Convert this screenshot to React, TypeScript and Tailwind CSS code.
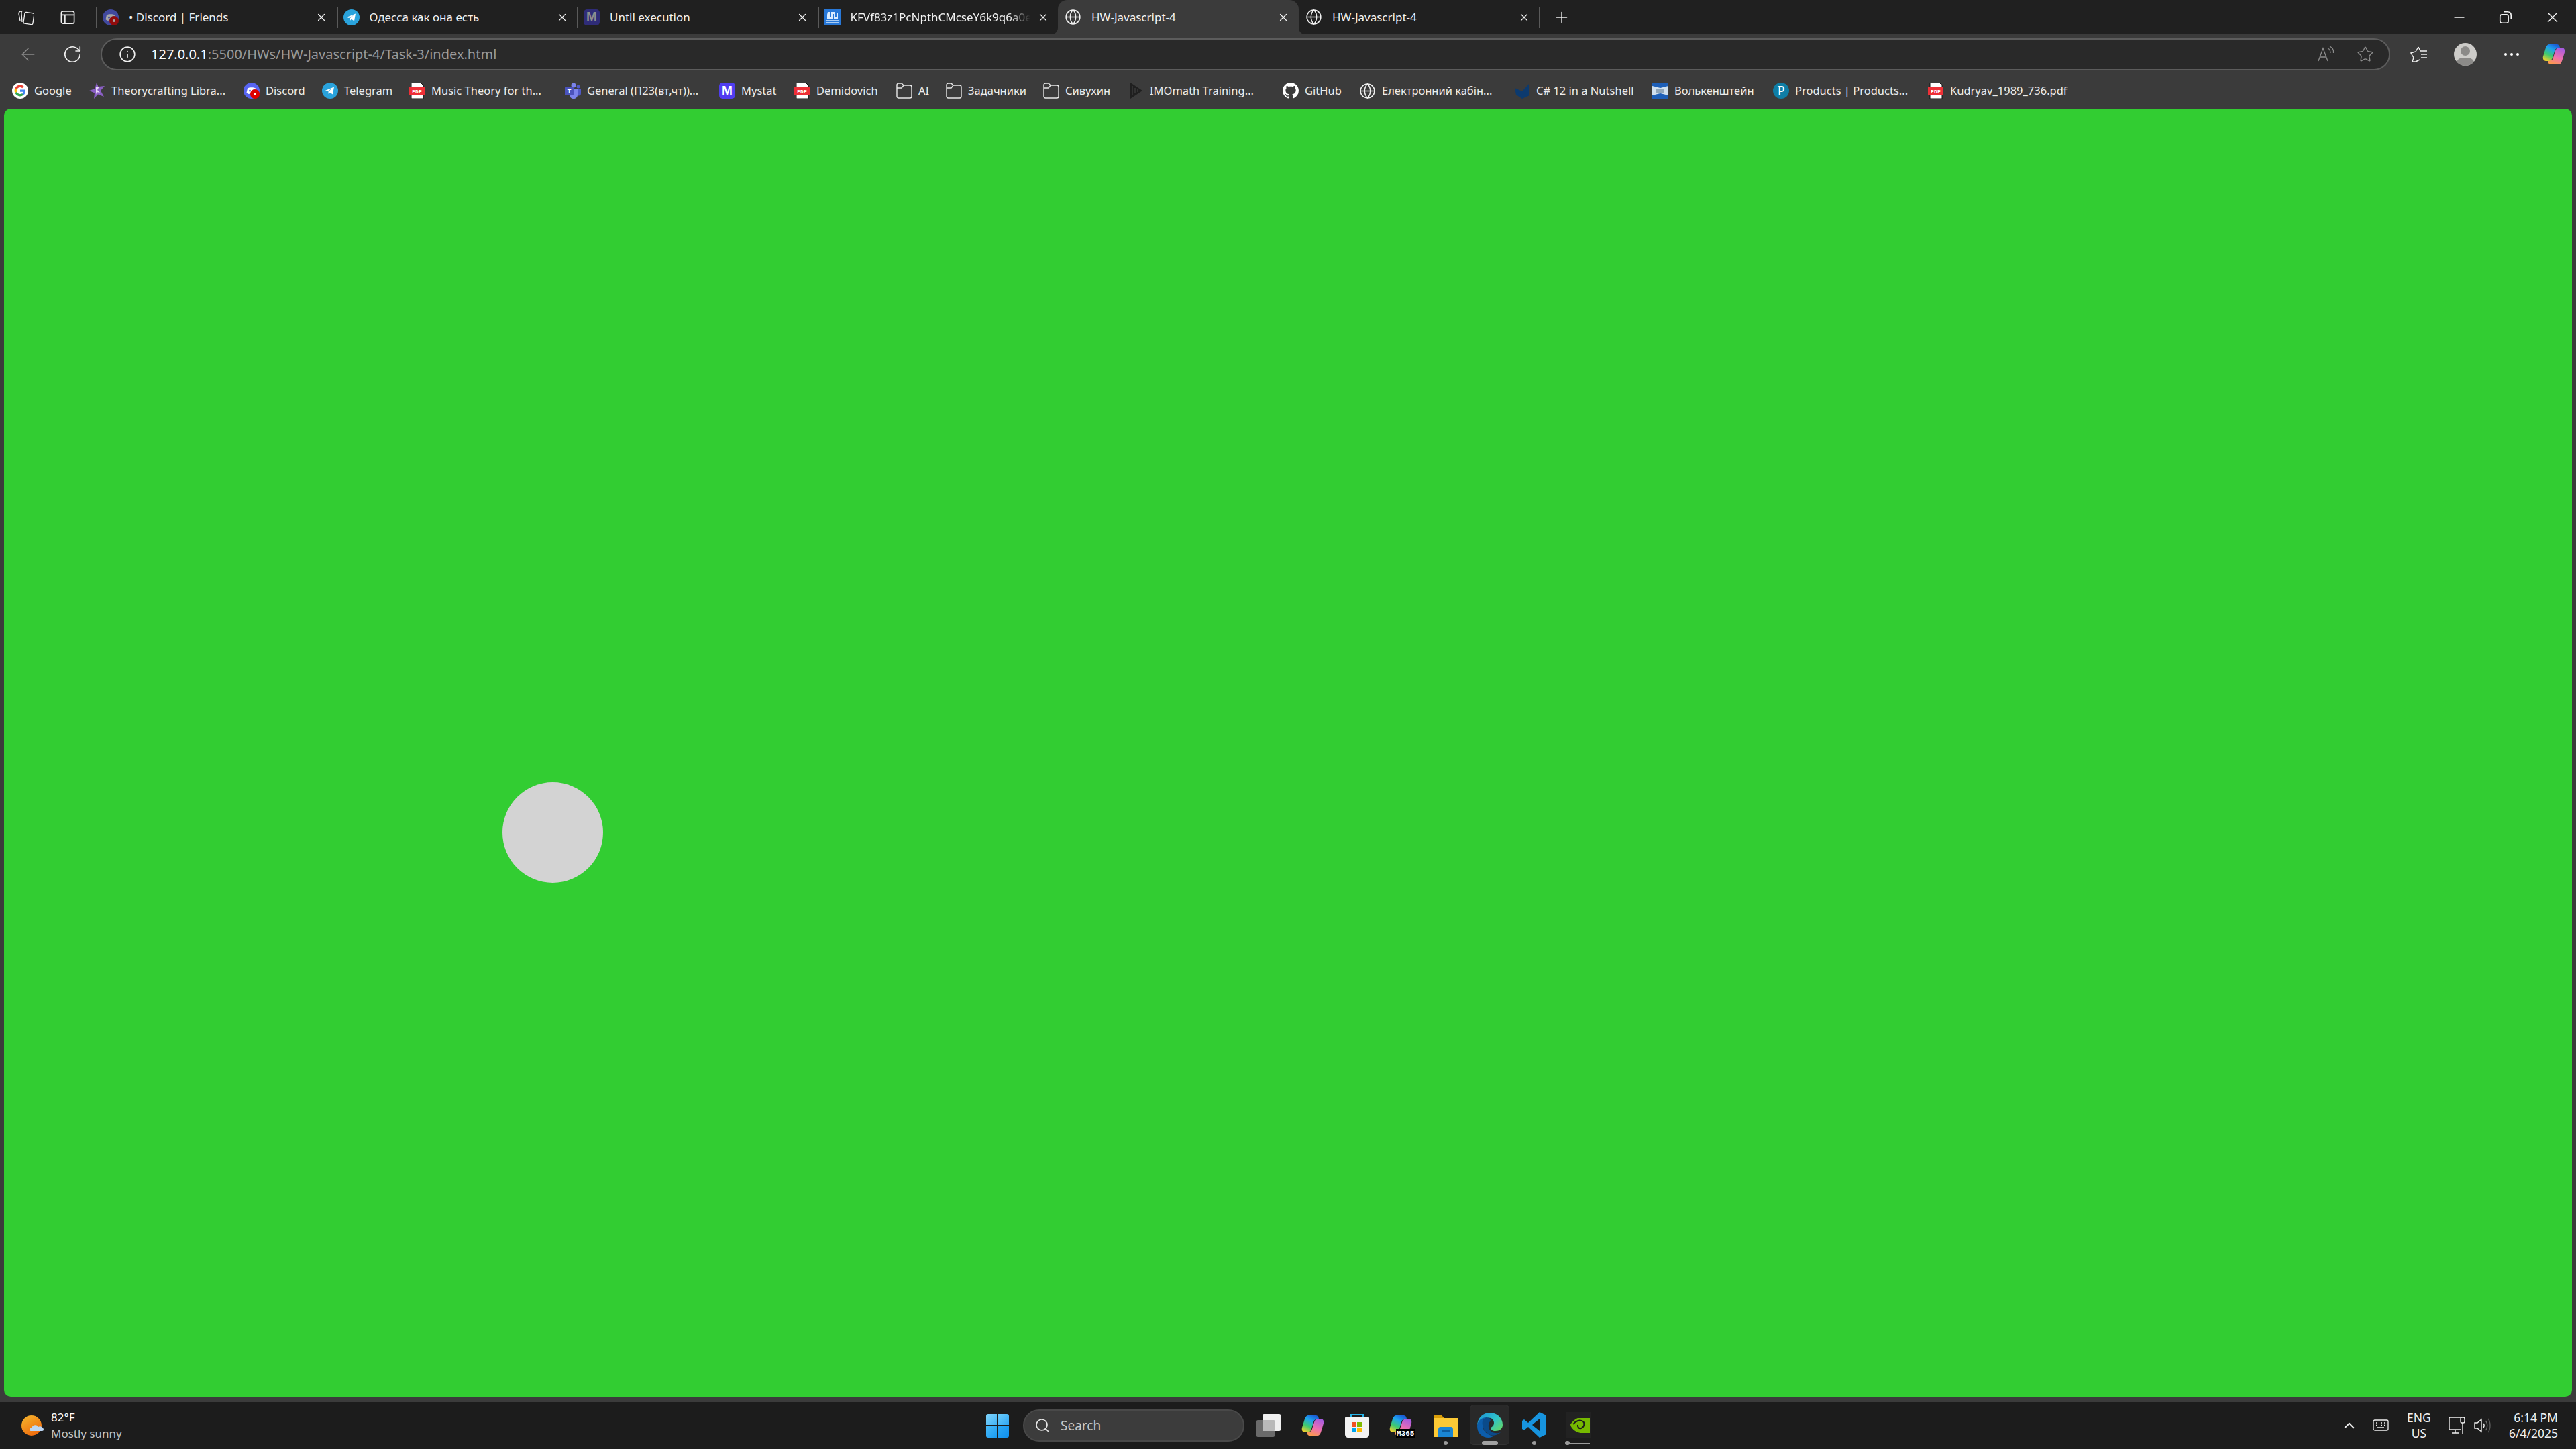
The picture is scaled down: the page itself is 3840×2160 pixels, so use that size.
import React from "react";
import { ArrowLeft, ChevronUp, Globe, Info, Minus, Plus, RotateCw, Search, Star, X } from "lucide-react";

const Telegram = () => (
  <svg viewBox="0 0 24 24" className="w-6 h-6 shrink-0">
    <circle cx="12" cy="12" r="12" fill="#2aa3dc" />
    <path d="M5 11.8 18 6.6 16 17.6 11.8 14.8 9.8 16.9 9.4 13.6 15.4 8.6 8 12.9Z" fill="#fff" />
  </svg>
);
const DiscordIcon = ({ dim }: { dim?: boolean }) => (
  <svg viewBox="0 0 24 24" className={dim ? "w-6 h-6 shrink-0 opacity-60" : "w-6 h-6 shrink-0"}>
    <circle cx="12" cy="12" r="12" fill="#5865f2" />
    <path d="M6 8.5C8.5 6.8 15.5 6.8 18 8.5L19.5 15C18 16.5 16.5 17 15.5 17L14.5 15.5H9.5L8.5 17C7.5 17 6 16.5 4.5 15Z" fill="#fff" />
    <circle cx="9.5" cy="12" r="1.5" fill="#5865f2" />
    <circle cx="14.5" cy="12" r="1.5" fill="#5865f2" />
    <circle cx="17" cy="17" r="7" fill="#dd0000" />
    <circle cx="17" cy="17" r="2" fill="#fff" />
  </svg>
);
const GoogleIcon = () => (
  <svg viewBox="0 0 24 24" className="w-6 h-6 shrink-0">
    <circle cx="12" cy="12" r="12" fill="#fff" />
    <g transform="translate(3.6 3.6) scale(.35)">
      <path fill="#EA4335" d="M24 9.5c3.5 0 6.6 1.2 9.1 3.6l6.8-6.8C35.8 2.4 30.300 0 24 0 14.600 0 6.500 5.400 2.600 13.200l7.900 6.200C12.400 13.700 17.700 9.500 24 9.500z" />
      <path fill="#4285F4" d="M47 24.500c0-1.600-.1-3.100-.4-4.500H24v9h12.900c-.6 3-2.200 5.500-4.800 7.200l7.700 6C44.300 37.900 47 31.800 47 24.500z" />
      <path fill="#FBBC05" d="M10.500 28.600c-.5-1.500-.8-3-.8-4.600s.3-3.100.8-4.600l-7.900-6.200C.9 16.500 0 20.100 0 24s.9 7.500 2.600 10.800l7.900-6.200z" />
      <path fill="#34A853" d="M24 48c6.500 0 11.900-2.100 15.800-5.800l-7.700-6c-2.100 1.400-4.900 2.300-8.100 2.300-6.300 0-11.600-4.200-13.500-9.900l-7.900 6.200C6.500 42.600 14.600 48 24 48z" />
    </g>
  </svg>
);
const TheoryIcon = () => (
  <svg viewBox="0 0 24 24" className="w-6 h-6 shrink-0">
    <path d="M11 0 13.500 6 23 5 17 12 22 21 13 17.500 7 24 8 15.500 0 12 8.500 9Z" fill="#8a5fc4" />
    <path d="M10 7 15 6 12 11 16 15 11 14 10 18Z" fill="#e5d8f7" />
  </svg>
);
const PdfIcon = () => (
  <svg viewBox="0 0 24 24" className="w-6 h-6 shrink-0">
    <path d="M3 0H17L21 4V24H3Z" fill="#fff" stroke="#111" strokeWidth="1" />
    <rect x="0" y="7" width="23" height="11" fill="#ee2f37" />
    <text x="11.500" y="15.500" textAnchor="middle" fontSize="8" fontWeight="700" fill="#fff" fontFamily="Liberation Mono, monospace">PDF</text>
  </svg>
);
const TeamsIcon = () => (
  <svg viewBox="0 0 24 24" className="w-6 h-6 shrink-0">
    <circle cx="13" cy="4" r="3.500" fill="#7b83eb" />
    <circle cx="20" cy="6" r="2.500" fill="#5059c9" />
    <path d="M16 9H24V16C24 19 21 20 19 19Z" fill="#5059c9" />
    <path d="M7 9H19V18C19 22 16 24 13 24 10 24 7 22 7 18Z" fill="#7b83eb" />
    <rect x="0" y="6" width="13" height="13" rx="1.500" fill="#4b53bc" />
    <text x="6.500" y="16" textAnchor="middle" fontSize="9" fontWeight="700" fill="#fff" fontFamily="Liberation Sans, sans-serif">T</text>
  </svg>
);
const MystatIcon = ({ dim }: { dim?: boolean }) => (
  <div className={dim ? "w-6 h-6 shrink-0 rounded-[5px] bg-[#2f2c78] flex items-center justify-center text-[#8e8e8e] text-[19px] font-bold font-['Liberation_Sans',sans-serif]" : "w-6 h-6 shrink-0 rounded-[5px] bg-[#4f3df0] flex items-center justify-center text-white text-[19px] font-bold font-['Liberation_Sans',sans-serif]"}>
    M
  </div>
);
const ShagIcon = () => (
  <svg viewBox="0 0 24 24" className="w-6 h-6 shrink-0">
    <rect width="24" height="24" fill="#2878d8" />
    <path d="M4 4V14H12V7H14V14H20V5H18V12H16V4H10V12H8V4H6V12Z" fill="#dcecff" />
    <rect x="3" y="16" width="18" height="2" fill="#a9cdf5" />
    <rect x="3" y="19" width="18" height="2" fill="#a9cdf5" />
  </svg>
);
const FolderIcon = () => (
  <svg viewBox="0 0 24 24" fill="none" stroke="#e8e8e8" strokeWidth="1.400" className="w-6 h-6 shrink-0">
    <path d="M1 3.500C1 2 2 1 3.500 1H8L11 4H20.500C22 4 23 5 23 6.500V20.500C23 22 22 23 20.500 23H3.500C2 23 1 22 1 20.500Z" />
    <path d="M1 8H8L11 4" />
  </svg>
);
const ImoIcon = () => (
  <svg viewBox="0 0 24 24" className="w-6 h-6 shrink-0">
    <path d="M4 0 22 12 4 24Z" fill="#1f1f1f" />
    <path d="M7 5V19M11 8V16M15 10V14" stroke="#3a3a3a" strokeWidth="1.500" />
  </svg>
);
const GithubIcon = () => (
  <svg viewBox="0 0 16 16" className="w-6 h-6 shrink-0" fill="#fff">
    <path d="M8 0C3.580 0 0 3.580 0 8c0 3.540 2.290 6.530 5.470 7.590.4.070.55-.17.55-.38 0-.19-.01-.82-.01-1.490-2.010.370-2.530-.490-2.690-.940-.09-.230-.480-.940-.820-1.130-.280-.150-.680-.520-.010-.530.630-.010 1.080.580 1.230.820.720 1.210 1.870.870 2.330.660.070-.520.280-.870.510-1.070-1.780-.200-3.640-.890-3.640-3.950 0-.870.310-1.590.820-2.150-.080-.200-.360-1.020.080-2.120 0 0 .670-.210 2.200.820.640-.180 1.320-.270 2-.270s1.360.090 2 .270c1.530-1.040 2.200-.820 2.200-.820.440 1.100.160 1.920.080 2.120.510.560.820 1.270.820 2.150 0 3.070-1.870 3.750-3.650 3.950.290.250.540.730.540 1.480 0 1.070-.010 1.930-.010 2.200 0 .210.150.460.550.380A8.013 8.013 0 0016 8c0-4.420-3.580-8-8-8z" />
  </svg>
);
const GlobeIcon = () => <Globe strokeWidth={1.4} color="#f0f0f0" className="w-[25px] h-[25px] shrink-0" />;
const BookIcon = () => (
  <svg viewBox="0 0 24 24" className="w-6 h-6 shrink-0">
    <path d="M1 8 12 13 23 1V19L12 24 3 18Z" fill="#0c3a6e" />
  </svg>
);
const VolkIcon = () => (
  <svg viewBox="0 0 24 24" className="w-6 h-6 shrink-0">
    <rect width="24" height="24" fill="#cfe0ef" />
    <path d="M0 0H24V5L12 8 0 5Z" fill="#1d5fb8" />
    <path d="M0 24H24V19L12 16 0 19Z" fill="#1d5fb8" />
    <rect x="6" y="10" width="12" height="5" fill="#8fa6ba" />
  </svg>
);
const PearsonIcon = () => (
  <div className="w-6 h-6 shrink-0 rounded-full bg-[#0f7ea6] flex items-center justify-center text-white text-[20px] leading-none font-['Liberation_Serif',serif]">P</div>
);

const Copilot = ({ id, size = "w-[34px] h-[34px]" }: { id: string; size?: string }) => (
  <svg viewBox="0 0 34 34" className={size + " shrink-0"}>
    <defs>
      <linearGradient id={id + "a"} x1="0.700" y1="0" x2="0.200" y2="1">
        <stop offset="0" stopColor="#1a5fd8" />
        <stop offset="0.300" stopColor="#1fa3ee" />
        <stop offset="0.650" stopColor="#3ec96f" />
        <stop offset="1" stopColor="#f5cf2a" />
      </linearGradient>
      <linearGradient id={id + "b"} x1="0.700" y1="0" x2="0.300" y2="1">
        <stop offset="0" stopColor="#a65be0" />
        <stop offset="0.550" stopColor="#ee6fb0" />
        <stop offset="1" stopColor="#fb9a4b" />
      </linearGradient>
    </defs>
    <path d="M24 32H13C10 32 8 30 8 26H12C14 26 15 25 16 22L19 12C20 9 22 7 26 7H29C32 7 34 10 33 14L29 27C28 30 26 32 24 32Z" fill={`url(#${id}b)`} />
    <path d="M10 2H21C24 2 26 4 26 8H22C20 8 19 9 18 12L15 22C14 25 12 27 8 27H5C2 27 0 24 1 20L5 7C6 4 8 2 10 2Z" fill={`url(#${id}a)`} />
  </svg>
);

const Divider = () => <div className="w-[2px] h-[30px] bg-[#5a5a5a] shrink-0" />;

const tabClose = <X strokeWidth={1.6} color="#f2f2f2" className="w-[18px] h-[18px] shrink-0" />;

function Tab({ icon, title, fade, bullet }: { icon: React.ReactNode; title: string; fade?: boolean; bullet?: boolean }) {
  return (
    <div className="w-[358.500px] h-full flex items-center shrink-0">
      <Divider />
      <div className="w-[8px] shrink-0" />
      <div className="w-[39px] shrink-0 flex">{icon}</div>
      <div className={fade ? "w-[268px] mr-[10px] shrink-0 overflow-hidden whitespace-nowrap text-[#f2f2f2] [mask-image:linear-gradient(to_right,#000_88%,transparent)]" : "w-[278px] shrink-0 overflow-hidden whitespace-nowrap text-[#f2f2f2]"}>
        {bullet ? "• " : ""}{title}
      </div>
      <div className="w-[18px] shrink-0 flex justify-center">{tabClose}</div>
    </div>
  );
}

function Bookmark({ w, icon, label }: { w: string; icon: React.ReactNode; label: string }) {
  return (
    <div className={w + " shrink-0 flex items-center gap-[9px] whitespace-nowrap"}>
      {icon}
      <span>{label}</span>
    </div>
  );
}

const Slot = ({ children, dot }: { children: React.ReactNode; dot?: React.ReactNode }) => (
  <div className="relative w-[66px] h-full flex items-center justify-center shrink-0">
    {children}
    {dot}
  </div>
);
const Dot = () => <div className="absolute bottom-[6px] left-[30px] w-[6px] h-[6px] rounded-full bg-[#9a9a9a]" />;

export default function App() {
  return (
    <div className="w-[3840px] h-[2160px] flex flex-col overflow-hidden bg-[#3b3b3b] text-white font-['Noto_Sans',sans-serif]">
      {/* tab strip */}
      <div className="h-[51px] shrink-0 flex bg-[#202020] text-[17px]">
        <div className="w-[143px] shrink-0 flex items-center pl-[27px] gap-[39px]">
          <svg viewBox="0 0 24 24" fill="none" stroke="#f0f0f0" strokeWidth="1.300" className="w-6 h-6">
            <rect x="9" y="5" width="14" height="17" rx="2" transform="rotate(8 16 13)" />
            <path d="M8 2C5 3 5 3 5 6L6 19M4 3C1 4 1 5 1 7L3 17" />
          </svg>
          <svg viewBox="0 0 24 24" fill="none" stroke="#f0f0f0" strokeWidth="1.800" className="w-[22px] h-[22px]">
            <rect x="1.500" y="2" width="21" height="20" rx="3" />
            <path d="M1.500 8H22.500M7.500 8V22" />
          </svg>
        </div>
        <Tab icon={<DiscordIcon dim />} title="Discord | Friends" bullet />
        <Tab icon={<Telegram />} title="Одесса как она есть" />
        <Tab icon={<MystatIcon dim />} title="Until execution" />
        <Tab icon={<ShagIcon />} title="KFVf83z1PcNpthCMcseY6k9q6a0e" fade />
        <div className="relative w-[359px] h-full shrink-0 flex items-center bg-[#3b3b3b] rounded-t-[14px] pl-[10px]">
          <svg viewBox="0 0 10 10" className="absolute left-[-10px] bottom-0 w-[10px] h-[10px]">
            <path d="M10 0V10H0C6 10 10 6 10 0Z" fill="#3b3b3b" />
          </svg>
          <div className="w-[40px] shrink-0 flex"><GlobeIcon /></div>
          <div className="w-[277px] shrink-0 whitespace-nowrap text-[#f2f2f2]">HW-Javascript-4</div>
          {tabClose}
          <svg viewBox="0 0 10 10" className="absolute right-[-10px] bottom-0 w-[10px] h-[10px]">
            <path d="M0 0V10H10C4 10 0 6 0 0Z" fill="#3b3b3b" />
          </svg>
        </div>
        <div className="w-[358px] h-full flex items-center shrink-0 pl-[10px]">
          <div className="w-[40px] shrink-0 flex"><GlobeIcon /></div>
          <div className="w-[277px] shrink-0 whitespace-nowrap text-[#f2f2f2]">HW-Javascript-4</div>
          {tabClose}
        </div>
        <div className="flex items-center"><Divider /></div>
        <div className="flex items-center pl-[19px]"><Plus strokeWidth={1.3} color="#f0f0f0" className="w-[26px] h-[26px]" /></div>
        <div className="ml-auto flex items-center gap-[46px] pr-[22px]">
          <Minus strokeWidth={1.300} color="#f5f5f5" className="w-[24px] h-[24px]" />
          <svg viewBox="0 0 16 16" fill="none" stroke="#f5f5f5" strokeWidth="1.200" className="w-[22px] h-[22px]">
            <rect x="2" y="5" width="9" height="9" rx="2" />
            <path d="M6 2H10C12.500 2 14 3.500 14 6V10" />
          </svg>
          <X strokeWidth={1.300} color="#f5f5f5" className="w-[26px] h-[26px]" />
        </div>
      </div>

      {/* toolbar */}
      <div className="h-[57px] shrink-0 flex items-center pt-[3px]">
        <div className="w-[150px] shrink-0 flex items-center pl-[27px] gap-[36px]">
          <ArrowLeft strokeWidth={1.200} color="#8a8a8a" className="w-[30px] h-[30px]" />
          <RotateCw strokeWidth={1.300} color="#f0f0f0" className="w-[30px] h-[30px]" />
        </div>
        <div className="w-[3413px] h-[48px] shrink-0 flex items-center rounded-full border-2 border-[#5c5c5c] bg-[#292929] pl-[25px] pr-[22px]">
          <Info strokeWidth={1.500} color="#f0f0f0" className="w-[26px] h-[26px] shrink-0" />
          <div className="ml-[22px] text-[20px] whitespace-nowrap text-[#9a9a9a]">
            <span className="text-white">127.0.0.1</span>:5500/HWs/HW-Javascript-4/Task-3/index.html
          </div>
          <div className="ml-auto flex items-center gap-[33px]">
            <svg viewBox="0 0 26 24" fill="none" stroke="#8c8c8c" strokeWidth="1.300" className="w-[26px] h-[24px]">
              <path d="M2 22 9 3 16 22M4.500 16H13.500M16 3C19 4 20 7 20 10M19 0C23 2 25 6 24.500 10" />
            </svg>
            <Star strokeWidth={1.300} color="#8c8c8c" className="w-[26px] h-[26px]" />
          </div>
        </div>
        <div className="ml-[30px] flex items-center">
          <svg viewBox="0 0 26 26" fill="none" stroke="#f0f0f0" strokeWidth="1.400" className="w-[26px] h-[26px]">
            <path d="M12 2 15 8 H25M16 13H25M16 18H25M8 24 3 24 5 18 1 11 8 9 12 2M8 24 14 21" />
          </svg>
          <div className="ml-[39px] relative w-[34px] h-[34px] rounded-full bg-[#cdccc9] overflow-hidden flex flex-col items-center pt-[5px]">
            <div className="w-[14px] h-[14px] rounded-full bg-[#8b8a88]" />
            <div className="absolute bottom-[-8px] w-[28px] h-[20px] rounded-full bg-[#8b8a88]" />
          </div>
          <div className="ml-[30px] w-[44px] flex justify-center gap-[5px]">
            <div className="w-[4px] h-[4px] rounded-full bg-white" />
            <div className="w-[4px] h-[4px] rounded-full bg-white" />
            <div className="w-[4px] h-[4px] rounded-full bg-white" />
          </div>
          <div className="ml-[24px]"><Copilot id="c1" /></div>
        </div>
      </div>

      {/* bookmarks */}
      <div className="h-[54px] shrink-0 flex items-center pl-[18px] text-[16.500px] text-[#ececec]">
        <Bookmark w="w-[115px]" icon={<GoogleIcon />} label="Google" />
        <Bookmark w="w-[230px]" icon={<TheoryIcon />} label="Theorycrafting Libra..." />
        <Bookmark w="w-[117px]" icon={<DiscordIcon />} label="Discord" />
        <Bookmark w="w-[130px]" icon={<Telegram />} label="Telegram" />
        <Bookmark w="w-[232px]" icon={<PdfIcon />} label="Music Theory for th..." />
        <Bookmark w="w-[230px]" icon={<TeamsIcon />} label="General (П23(вт,чт))..." />
        <Bookmark w="w-[112px]" icon={<MystatIcon />} label="Mystat" />
        <Bookmark w="w-[152px]" icon={<PdfIcon />} label="Demidovich" />
        <Bookmark w="w-[74px]" icon={<FolderIcon />} label="AI" />
        <Bookmark w="w-[145px]" icon={<FolderIcon />} label="Задачники" />
        <Bookmark w="w-[126px]" icon={<FolderIcon />} label="Сивухин" />
        <Bookmark w="w-[231px]" icon={<ImoIcon />} label="IMOmath Training..." />
        <Bookmark w="w-[114px]" icon={<GithubIcon />} label="GitHub" />
        <Bookmark w="w-[231px]" icon={<GlobeIcon />} label="Електронний кабін..." />
        <Bookmark w="w-[206px]" icon={<BookIcon />} label="C# 12 in a Nutshell" />
        <Bookmark w="w-[180px]" icon={<VolkIcon />} label="Волькенштейн" />
        <Bookmark w="w-[231px]" icon={<PearsonIcon />} label="Products | Products..." />
        <Bookmark w="w-[220px]" icon={<PdfIcon />} label="Kudryav_1989_736.pdf" />
      </div>

      {/* page */}
      <div className="flex-1 flex px-[6px] pb-[8px] min-h-0">
        <div className="relative flex-1 bg-[#32cd32] rounded-[10px]">
          <div className="absolute left-[743px] top-[1004px] w-[150px] h-[150px] rounded-full bg-[#d3d3d3]" />
        </div>
      </div>

      {/* taskbar */}
      <div className="h-[70px] shrink-0 flex items-center bg-[#1c1c1c] relative">
        <div className="w-[1454px] shrink-0 flex items-center pl-[32px] gap-[10px]">
          <svg viewBox="0 0 34 30" className="w-[34px] h-[30px] shrink-0">
            <defs>
              <linearGradient id="sun" x1="0" y1="0" x2="0.600" y2="1">
                <stop offset="0" stopColor="#f5b82e" />
                <stop offset="1" stopColor="#ef6c0e" />
              </linearGradient>
            </defs>
            <circle cx="15" cy="15" r="15" fill="url(#sun)" />
            <path d="M14 23C11 23 12 18 15 18.500 16 15 22 12 25 17 28 15 33 18 33 21 33 22 32 23 31 23Z" fill="#bcd6f5" />
          </svg>
          <div className="flex flex-col leading-[24px] whitespace-nowrap text-[17px]">
            <span className="text-white">82°F</span>
            <span className="text-[#c4c4c4]">Mostly sunny</span>
          </div>
        </div>
        <div className="w-[66px] shrink-0 flex justify-center">
          <div className="w-[34px] h-[35px] grid grid-cols-2 grid-rows-2 gap-[2px]">
            <div className="bg-gradient-to-br from-[#7fd4fb] to-[#3fb2f5] rounded-tl-[3px]" />
            <div className="bg-gradient-to-br from-[#6accfa] to-[#2ca6f4] rounded-tr-[3px]" />
            <div className="bg-gradient-to-br from-[#46b9f7] to-[#149bf1] rounded-bl-[3px]" />
            <div className="bg-gradient-to-br from-[#2aa8f5] to-[#0e8fee] rounded-br-[3px]" />
          </div>
        </div>
        <div className="w-[330px] h-[48px] shrink-0 ml-[5px] rounded-full bg-[#3c3c3c] border-2 border-[#494949] flex items-center pl-[15px] gap-[15px] text-[19px] text-[#c8c8c8]">
          <Search strokeWidth={1.700} color="#e6e6e6" className="w-[24px] h-[24px]" />
          <span>Search</span>
        </div>
        <div className="h-full flex ml-[3px]">
          <Slot>
            <div className="relative w-[36px] h-[34px]">
              <div className="absolute left-0 bottom-0 w-[27px] h-[25px] rounded-[2px] bg-[#6a6a6a]" />
              <div className="absolute right-0 top-0 w-[27px] h-[25px] rounded-[2px] bg-[#f0f0f0]" />
              <div className="absolute left-[9px] top-[9px] w-[18px] h-[16px] rounded-[1px] bg-[#b9b9b9]" />
            </div>
          </Slot>
          <Slot><Copilot id="c2" /></Slot>
          <Slot>
            <svg viewBox="0 0 36 35" className="w-[36px] h-[35px]">
              <path d="M9 6V1H27V6" fill="none" stroke="#25b5ea" strokeWidth="2" />
              <path d="M2 4H34C35 4 36 5 36 6V30C36 33 34 35 31 35H5C2 35 0 33 0 30V6C0 5 1 4 2 4Z" fill="#f2f2f2" />
              <rect x="10" y="12" width="7" height="7" fill="#f25022" />
              <rect x="18" y="12" width="7" height="7" fill="#7fba00" />
              <rect x="10" y="20" width="7" height="7" fill="#00a4ef" />
              <rect x="18" y="20" width="7" height="7" fill="#ffb900" />
            </svg>
          </Slot>
          <Slot>
            <div className="relative w-[36px] h-[34px]">
              <Copilot id="c3" />
              <span className="absolute left-[10px] bottom-[-2px] bg-black text-white text-[11px] leading-[14px] px-[1px] font-['Liberation_Mono',monospace] font-bold">M365</span>
            </div>
          </Slot>
          <Slot dot={<Dot />}>
            <svg viewBox="0 0 36 33" className="w-[36px] h-[33px]">
              <path d="M0 2C0 1 1 0 2 0H11L14 3H15V10H0Z" fill="#d99e0a" />
              <path d="M0 5H36V33H0Z" fill="#fcc935" />
              <path d="M7 33V22C7 20 8 18 10 18H26C28 18 29 20 29 22V33Z" fill="#1a86d4" />
              <rect x="12" y="23" width="12" height="2" fill="#0d5c9e" />
            </svg>
          </Slot>
          <div className="relative w-[66px] h-full flex items-center justify-center shrink-0">
            <div className="absolute left-[3px] top-[4px] w-[59px] h-[60px] rounded-[6px] bg-[#292929] border border-[#333333]" />
            <svg viewBox="0 0 38 37" className="relative w-[38px] h-[37px] mb-[2px]">
              <defs>
                <linearGradient id="edgeA" x1="0" y1="0" x2="1" y2="0.800">
                  <stop offset="0" stopColor="#1a8fd8" />
                  <stop offset="0.600" stopColor="#2fc3c9" />
                  <stop offset="1" stopColor="#5fd66e" />
                </linearGradient>
              </defs>
              <path d="M19 0C30 0 38 8 38 18 38 24 33 27 27 27 23 27 20 25 20 23 20 21 25 21 25 15 25 10 20 6 14 8 6 10 0 16 0 20 0 8 8 0 19 0Z" fill="url(#edgeA)" />
              <path d="M0 20C0 12 7 7 13 7 9 9 8 13 8 18 8 27 16 35 26 34 22 36 20 37 17 37 7 37 0 30 0 20Z" fill="#0c5dab" />
              <path d="M13 7C8 9 7 14 8 18 9 28 18 36 28 33 31 32 33 31 35 29 31 31 24 31 20 27 16 23 16 17 19 13 21 11 20 7 13 7Z" fill="#0a4a8a" />
            </svg>
            <div className="absolute bottom-[6px] left-[21px] w-[24px] h-[6px] rounded-full bg-[#a0a0a0]" />
          </div>
          <Slot dot={<Dot />}>
            <svg viewBox="0 0 36 38" className="w-[36px] h-[38px] mb-[2px]">
              <path d="M26 0 36 5V33L26 38 9 22 3 27 0 25V13L3 11 9 16ZM26 10 15 19 26 28Z" fill="#1794df" fillRule="evenodd" />
            </svg>
          </Slot>
          <Slot>
            <div className="w-[38px] h-[38px] bg-[#222222] flex items-center justify-end mb-[2px]">
              <svg viewBox="0 0 32 32" className="w-[32px] h-[32px]">
                <path d="M12 6H30V28H16C8 27 1 20 1 15 6 9 9 7 12 6Z" fill="#76b900" />
                <path d="M5 15C9 10 15 8 20 11 23 14 21 20 17 21 14 22 11 19 12 16" fill="none" stroke="#1c1c1c" strokeWidth="2" />
              </svg>
            </div>
            <div className="absolute bottom-[6px] left-[13px] w-[7px] h-[6px] rounded-full bg-[#9a9a9a]" />
            <div className="absolute bottom-[7px] left-[18px] w-[32px] h-[2px] bg-[#9a9a9a]" />
          </Slot>
        </div>
        <div className="ml-auto flex items-center pr-[27px] text-[17.500px] text-[#f0f0f0]">
          <ChevronUp strokeWidth={1.700} color="#f0f0f0" className="w-[26px] h-[26px]" />
          <svg viewBox="0 0 24 18" fill="none" stroke="#f0f0f0" strokeWidth="1.300" className="w-[24px] h-[18px] ml-[22px]">
            <rect x="1" y="1" width="22" height="15" rx="2" />
            <path d="M5 5H6M9 5H10M13 5H14M17 5H18M5 8.500H6M9 8.500H10M13 8.500H14M17 8.500H18M7 12H17" />
          </svg>
          <div className="w-[60px] ml-[15px] flex flex-col items-center leading-[23px]">
            <span>ENG</span>
            <span>US</span>
          </div>
          <svg viewBox="0 0 26 26" fill="none" stroke="#f0f0f0" strokeWidth="1.400" className="w-[26px] h-[26px] ml-[14px]">
            <path d="M18 1H2C1 1 1 2 1 3V18C1 19 1 19 2 19H18M5 24H16M10 19V24M21 9V25" />
            <rect x="18" y="1" width="6" height="8" rx="2" />
          </svg>
          <svg viewBox="0 0 26 22" fill="none" stroke="#f0f0f0" strokeWidth="1.400" className="w-[26px] h-[22px] ml-[12px]">
            <path d="M1 7H5L11 2V20L5 15H1Z" />
            <path d="M14 8C15.500 10 15.500 12 14 14" />
            <path d="M17.500 4C20.500 8 20.500 14 17.500 18" stroke="#6a6a6a" />
            <path d="M21 1C25 6 25 16 21 21" stroke="#5a5a5a" />
          </svg>
          <div className="ml-[26px] flex flex-col items-end leading-[23px] whitespace-nowrap">
            <span>6:14 PM</span>
            <span>6/4/2025</span>
          </div>
        </div>
      </div>
    </div>
  );
}
